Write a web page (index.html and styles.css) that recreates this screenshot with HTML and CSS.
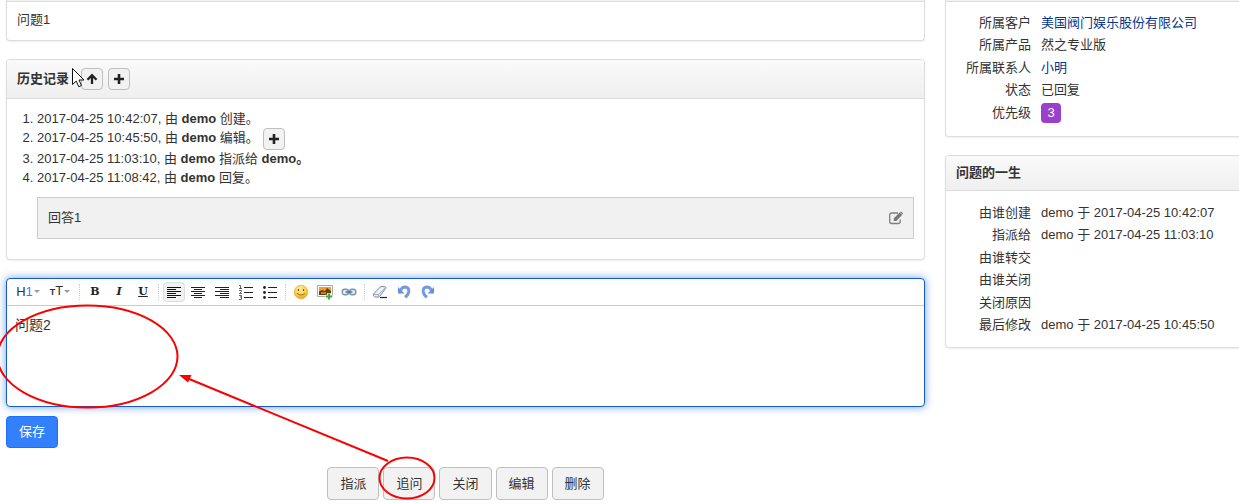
FILE: index.html
```html
<!DOCTYPE html>
<html lang="zh-CN">
<head>
<meta charset="utf-8">
<title>问题1</title>
<link rel="stylesheet" href="styles.css">
</head>
<body>
<div class="page">
  <main class="main">
    <section class="panel panel-cut">
      <div class="panel-edge"></div>
      <div class="panel-body question">问题1</div>
    </section>

    <section class="panel">
      <header class="panel-heading">
        <h2 class="title">历史记录</h2>
        <div class="heading-tools">
          <button class="btn-mini" type="button" aria-label="排序"><svg width="12" height="12" viewBox="0 0 12 12"><path d="M6 11V2M1.500 6.700 6 2.200l4.500 4.500" fill="none" stroke="#222" stroke-width="2.300"/></svg></button>
          <button class="btn-mini" type="button" aria-label="全部展开"><svg width="12" height="12" viewBox="0 0 12 12"><path d="M6 1v10M1 6h10" stroke="#222" stroke-width="2.600"/></svg></button>
        </div>
      </header>
      <div class="panel-body">
        <ol class="history">
          <li>2017-04-25 10:42:07, 由 <strong>demo</strong> 创建。</li>
          <li>2017-04-25 10:45:50, 由 <strong>demo</strong> 编辑。<button class="btn-mini btn-inline" type="button" aria-label="展开"><svg width="12" height="12" viewBox="0 0 12 12"><path d="M6 1v10M1 6h10" stroke="#222" stroke-width="2.600"/></svg></button></li>
          <li>2017-04-25 11:03:10, 由 <strong>demo</strong> 指派给 <strong>demo。</strong></li>
          <li>2017-04-25 11:08:42, 由 <strong>demo</strong> 回复。
            <div class="comment">
              <span>回答1</span>
              <button class="btn-icon" type="button" aria-label="编辑回答"><svg width="14" height="14" viewBox="0 0 14 14"><path d="M9 2H2.800Q.7 2 .7 4v6.500q0 2 2.100 2h6.400q2 0 2-2V8.600" fill="none" stroke="#808080" stroke-width="1.300"/><path d="M4.800 9.900V7.300L10.600 1.500 13.100 4 7.300 9.900zM11.200.9q.7-.6 1.300 0l1.200 1.200q.5.6 0 1.200l-.3.3L10.900 1.200z" fill="#777"/></svg></button>
            </div>
          </li>
        </ol>
      </div>
    </section>

    <form class="reply">
      <div class="editor">
        <div class="toolbar">
          <button class="tool tool-wide" type="button" aria-label="标题"><span>H<span class="blue">1</span></span><i class="caret"></i></button>
          <button class="tool tool-wide" type="button" aria-label="文字大小"><span><b class="small-t">T</b>T</span><i class="caret"></i></button>
          <i class="sep"></i>
          <button class="tool serif" type="button" aria-label="粗体">B</button>
          <button class="tool serif italic" type="button" aria-label="斜体">I</button>
          <button class="tool serif underline" type="button" aria-label="下划线">U</button>
          <i class="sep"></i>
          <button class="tool active" type="button" aria-label="左对齐"><svg width="16" height="16" viewBox="0 0 16 16"><path d="M1 3.500h14M1 5.500h9M1 7.500h14M1 9.500h9M1 11.500h14M1 13.500h9" stroke="#111"/></svg></button>
          <button class="tool" type="button" aria-label="居中"><svg width="16" height="16" viewBox="0 0 16 16"><path d="M1 3.500h14M4 5.500h8M1 7.500h14M4 9.500h8M1 11.500h14M4 13.500h8" stroke="#222"/></svg></button>
          <button class="tool" type="button" aria-label="右对齐"><svg width="16" height="16" viewBox="0 0 16 16"><path d="M1 3.500h14M6 5.500h9M1 7.500h14M6 9.500h9M1 11.500h14M6 13.500h9" stroke="#222"/></svg></button>
          <button class="tool" type="button" aria-label="编号列表"><svg width="16" height="16" viewBox="0 0 16 16"><path d="M6 3.500h9M6 8.500h9M6 13.500h9" stroke="#222"/><path d="M1 1.500h1.500V5M1 4.500h3M1 6.500h2.500v1L1.500 9.500H4M1 11.500h2.500v1.500H2M3.500 13v2.500H1" fill="none" stroke="#555" stroke-width=".9"/></svg></button>
          <button class="tool" type="button" aria-label="项目列表"><svg width="16" height="16" viewBox="0 0 16 16"><path d="M6 3.500h9M6 8.500h9M6 13.500h9" stroke="#222"/><g fill="#222"><circle cx="2.500" cy="3.500" r="1.400"/><circle cx="2.500" cy="8.500" r="1.400"/><circle cx="2.500" cy="13.500" r="1.400"/></g></svg></button>
          <i class="sep"></i>
          <button class="tool" type="button" aria-label="表情"><svg width="16" height="16" viewBox="0 0 16 16"><defs><radialGradient id="face" cx=".45" cy=".3" r=".7"><stop offset="0" stop-color="#fff2a0"/><stop offset=".6" stop-color="#fbd14a"/><stop offset="1" stop-color="#e9a423"/></radialGradient></defs><circle cx="8" cy="8" r="6.700" fill="url(#face)" stroke="#e0a32e" stroke-width=".7"/><path d="M5.500 5v2M10.500 5v2" stroke="#80500d" stroke-width="1.200"/><path d="M4 9.300q4 3.600 8 0" fill="none" stroke="#a56c1c"/></svg></button>
          <button class="tool" type="button" aria-label="图片"><svg width="16" height="16" viewBox="0 0 16 16"><path d="M.5 1.500h15v11H.5z" fill="#f8f8f8" stroke="#aaa"/><path d="M2 3h12v8H2z" fill="#eda22d"/><path d="M2 7.500 5 6l3 1 2-3 4 3v4H2z" fill="#5f4013"/><path d="M4 8h5v2H4z" fill="#ca7d1d"/><path d="M12 9v7M8.500 12.500h7" stroke="#fff" stroke-width="3.600"/><path d="M12 9.500v6M9 12.500h6" stroke="#43a83f" stroke-width="2.200"/></svg></button>
          <button class="tool" type="button" aria-label="链接"><svg width="16" height="16" viewBox="0 0 16 16"><g fill="#e6edf7" stroke="#7d93b3" stroke-width="1.400"><rect x="1.200" y="5.300" width="6.300" height="5.400" rx="2.500"/><rect x="8.500" y="5.300" width="6.300" height="5.400" rx="2.500"/></g><path d="M4.500 8h7" stroke="#587197" stroke-width="1.500"/></svg></button>
          <i class="sep"></i>
          <button class="tool" type="button" aria-label="清除格式"><svg width="16" height="16" viewBox="0 0 16 16"><path d="M8 13.500h7" stroke="#222" stroke-width="1.200"/><path d="M1.500 10 8 3.200q.8-.8 2-.7l3 .3q1.500.3.700 1.600L7.500 12.500q-.6.8-1.700.7l-3.200-.3q-1.800-.5-1.100-2.900z" fill="#edf1f8" stroke="#7f8ca8"/><path d="M2 10.300 6.500 10.500 13.500 3.800M6.500 10.500 6 13" fill="none" stroke="#95a1b8" stroke-width=".9"/></svg></button>
          <button class="tool" type="button" aria-label="撤销"><svg width="16" height="16" viewBox="0 0 16 16"><path d="M4.500 6.500Q6 3 9.500 3.100q3.700.5 3.200 4.700-.5 3.400-3.700 5.400" fill="none" stroke="#7399e0" stroke-width="3"/><path d="M2 3v6.500h6.500z" fill="#6a90da"/></svg></button>
          <button class="tool" type="button" aria-label="重做"><svg width="16" height="16" viewBox="0 0 16 16"><path d="M11.500 6.500Q10 3 6.500 3.100 2.800 3.600 3.300 7.800q.5 3.400 3.700 5.400" fill="none" stroke="#7399e0" stroke-width="3"/><path d="M14 3v6.500H7.500z" fill="#6a90da"/></svg></button>
        </div>
        <textarea class="editor-text" aria-label="追问内容">问题2</textarea>
      </div>
      <button class="btn btn-primary" type="button">保存</button>
    </form>

    <div class="actions">
      <button class="btn" type="button">指派</button>
      <button class="btn" type="button">追问</button>
      <button class="btn" type="button">关闭</button>
      <button class="btn" type="button">编辑</button>
      <button class="btn" type="button">删除</button>
    </div>
  </main>

  <aside class="side">
    <section class="panel panel-cut">
      <div class="panel-edge"></div>
      <div class="panel-body basic">
        <table class="info">
          <tr><th scope="row">所属客户</th><td><a href="#">美国阀门娱乐股份有限公司</a></td></tr>
          <tr><th scope="row">所属产品</th><td>然之专业版</td></tr>
          <tr><th scope="row">所属联系人</th><td><a href="#">小明</a></td></tr>
          <tr><th scope="row">状态</th><td>已回复</td></tr>
          <tr><th scope="row">优先级</th><td><span class="priority">3</span></td></tr>
        </table>
      </div>
    </section>

    <section class="panel">
      <header class="panel-heading">
        <h2 class="title">问题的一生</h2>
      </header>
      <div class="panel-body life">
        <table class="info">
          <tr><th scope="row">由谁创建</th><td>demo 于 2017-04-25 10:42:07</td></tr>
          <tr><th scope="row">指派给</th><td>demo 于 2017-04-25 11:03:10</td></tr>
          <tr><th scope="row">由谁转交</th><td></td></tr>
          <tr><th scope="row">由谁关闭</th><td></td></tr>
          <tr><th scope="row">关闭原因</th><td></td></tr>
          <tr><th scope="row">最后修改</th><td>demo 于 2017-04-25 10:45:50</td></tr>
        </table>
      </div>
    </section>
  </aside>

  <svg class="marks" width="500" height="504" viewBox="0 0 500 504" aria-hidden="true">
    <path d="M72.500 68.500v16l3.700-3.400 2.600 5.600 2.700-1.200-2.500-5.500h5z" fill="#fff" stroke="#111"/>
    <g fill="none" stroke="#fa0000" stroke-width="2">
      <ellipse cx="87.500" cy="356.500" rx="90" ry="51"/>
      <ellipse cx="407" cy="478" rx="27.500" ry="20.500"/>
      <path d="M388 461 188 378.500"/>
    </g>
    <path d="M179 375l12.500 0-3.500 7.500z" fill="#fa0000"/>
  </svg>
</div>
</body>
</html>
```
FILE: styles.css
```css
* { box-sizing: border-box; }

body {
  margin: 0;
  background: #fff;
  color: #333;
  font: 13px/20px "Liberation Sans", "Noto Sans CJK SC", sans-serif;
}

button, textarea { font: inherit; color: inherit; }
svg { display: block; }

.page {
  position: relative;
  display: flex;
  align-items: flex-start;
  gap: 20px;
  padding: 0 0 4px 6px;
  overflow: hidden;
}

.main { flex: 1; min-width: 0; }

/* The side column runs past the right edge of the page. */
.side { flex: 0 0 302px; margin-right: -8px; }

.panel {
  margin-bottom: 18px;
  border: 1px solid #ddd;
  border-radius: 4px;
  background: #fff;
  box-shadow: 0 1px 2px rgba(0, 0, 0, .07);
}

.panel-cut {
  border-top: 0;
  border-radius: 0 0 4px 4px;
}

.panel-edge {
  height: 2px;
  background: #f1f1f1;
  border-bottom: 1px solid #ddd;
}

.panel-heading {
  display: flex;
  align-items: center;
  gap: 12px;
  padding: 8px 10px;
  border-bottom: 1px solid #ddd;
  border-radius: 3px 3px 0 0;
  background: linear-gradient(#fafafa, #efefef);
}

.title {
  margin: 0;
  font-size: 13px;
  line-height: 18px;
  font-weight: 700;
}

.heading-tools { display: flex; gap: 5px; }

.panel-body { padding: 10px; }
.question { padding: 8px 10px 10px; }
.basic { padding: 9px 10px 11px; }
.life { padding-bottom: 11px; }

.btn-mini {
  display: inline-flex;
  align-items: center;
  justify-content: center;
  width: 22px;
  height: 22px;
  padding: 0;
  border: 1px solid #bfbfbf;
  border-radius: 4px;
  background: #f2f2f2;
}

.btn-inline {
  margin: -1px 0 -1px 4px;
  vertical-align: middle;
}

.history {
  margin: 0;
  padding: 0 0 10px 20px;
  line-height: 19px;
}

.comment {
  display: flex;
  align-items: center;
  justify-content: space-between;
  margin-top: 10px;
  padding: 10px;
  border: 1px solid #ccc;
  background: #f1f1f1;
  line-height: 20px;
}

.btn-icon {
  padding: 0;
  border: 0;
  background: none;
}

.editor {
  border: 1px solid #145ccd;
  border-radius: 4px;
  background: #fff;
  box-shadow: 0 0 8px rgba(20, 92, 205, .6);
}

.toolbar {
  display: flex;
  align-items: center;
  height: 27px;
  padding: 0 5px;
  border-bottom: 1px solid #ccc;
}

.tool {
  display: flex;
  align-items: center;
  justify-content: center;
  width: 22px;
  height: 20px;
  margin: 0 1px;
  padding: 0;
  border: 1px solid transparent;
  border-radius: 4px;
  background: none;
}

.tool.active { border-color: #ddd; background: #f1f1f1; }

.tool-wide {
  gap: 1px;
  width: 30px;
  font-size: 13px;
}

.blue { color: #3280fc; }
.small-t { font-size: 9px; }

.caret {
  border: 3px solid transparent;
  border-top-color: #999;
  border-bottom: 0;
}

.serif { font-family: "DejaVu Serif", serif; font-size: 11px; font-weight: 700; color: #222; }
.italic { font-style: italic; }
.underline { text-decoration: underline; }

.sep {
  width: 1px;
  height: 16px;
  margin: 0 3px;
  border-left: 1px dotted #ccc;
}

.editor-text {
  display: block;
  width: 100%;
  height: 100px;
  padding: 9px 8px;
  border: 0;
  outline: 0;
  background: none;
  font-size: 14px;
  resize: none;
}

.btn {
  padding: 5px 12px;
  border: 1px solid #bfbfbf;
  border-radius: 4px;
  background: #f2f2f2;
  line-height: 21px;
}

.btn-primary {
  margin-top: 9px;
  border-color: #1970fc;
  background: #3280fc;
  color: #fff;
  line-height: 20px;
}

.actions {
  display: flex;
  justify-content: center;
  gap: 4px;
  margin-top: 19px;
}

.info {
  width: 100%;
  border-collapse: collapse;
}

.info tr { height: 22px; }
.info tr:nth-child(odd) { height: 23px; }

.info th {
  width: 85px;
  padding: 0 10px 0 0;
  font-weight: 400;
  text-align: right;
  white-space: nowrap;
}

.info td { padding: 0; }

a { color: #03368c; text-decoration: none; }

.priority {
  display: block;
  width: 20px;
  margin: 2px 0;
  border-radius: 4px;
  background: #9a40cc;
  color: #fff;
  text-align: center;
}

/* Pointer and hand-drawn marks lie over the page content. */
.marks {
  position: absolute;
  top: 0;
  left: 0;
  pointer-events: none;
}
```
